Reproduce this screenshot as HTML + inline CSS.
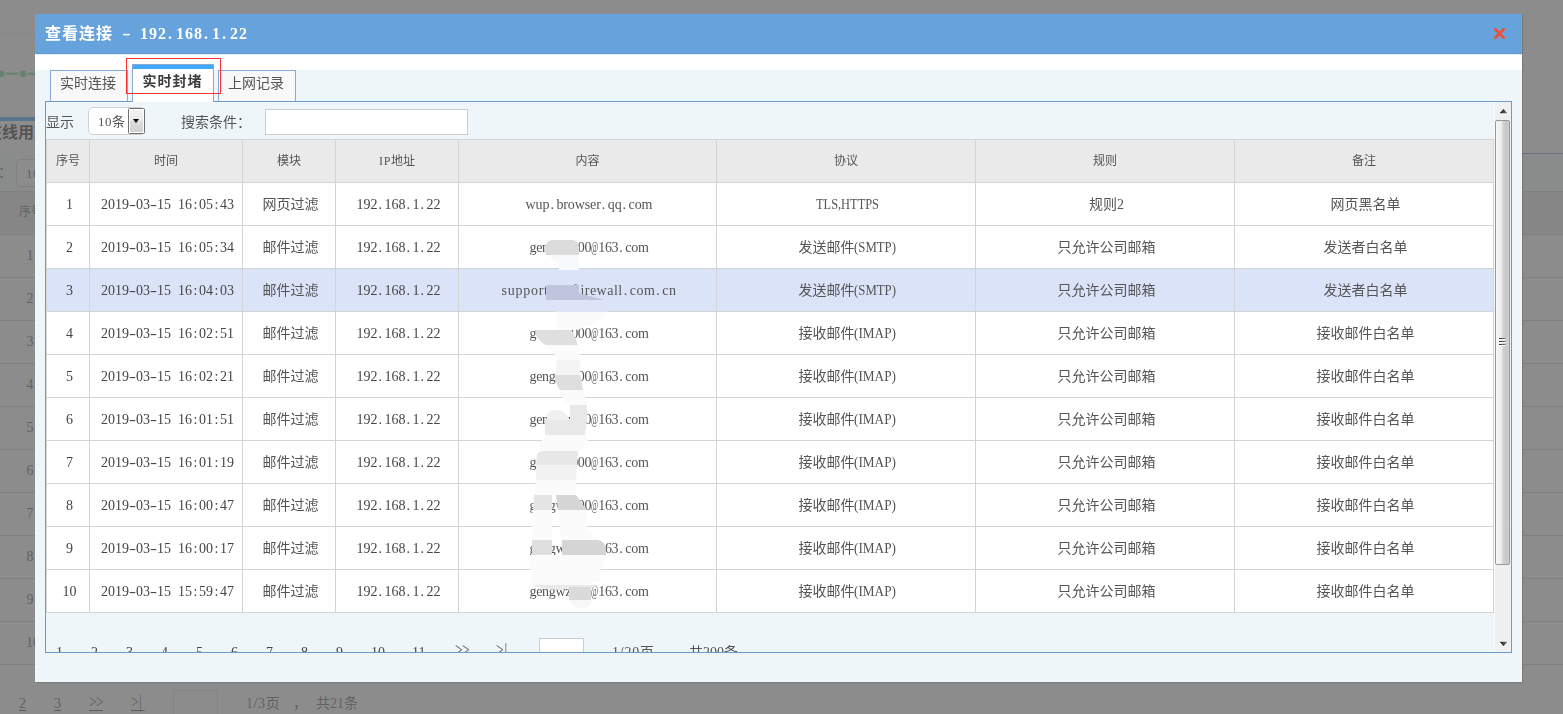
<!DOCTYPE html>
<html lang="zh-CN">
<head>
<meta charset="utf-8">
<title>查看连接 - 192.168.1.22</title>
<style>
*{box-sizing:border-box}
html,body{margin:0;padding:0}
body{width:1563px;height:714px;overflow:hidden;position:relative;background:#fff;
  font-family:"Liberation Serif","Noto Sans CJK SC",serif;font-size:14px;color:#555}
.abs{position:absolute}
/* ---------- background page ---------- */
#bg{position:absolute;left:0;top:0;width:1563px;height:714px;overflow:hidden;background:#fff;color:#606060}
#bg .ln{position:absolute;left:0;width:1563px;height:1px;background:#ccc}
#bg .num{position:absolute;width:20px;text-align:center;font-size:14px;line-height:16px}
#bg u{position:absolute;top:0;height:15px;text-align:center;text-decoration:none;border-bottom:1px solid #505050}
#bg u.g{font-size:18px;line-height:12px;letter-spacing:-1px;text-align:left;transform:scaleX(.76);transform-origin:0 0;width:18.4px !important}
#mask{position:absolute;left:0;top:0;width:1563px;height:714px;background:rgba(98,98,98,.73)}
/* ---------- dialog ---------- */
#dlg{will-change:transform;position:absolute;left:35px;top:14px;width:1487px;height:668px;background:#eef6fa;
  box-shadow:1px 1px 1px rgba(0,0,0,.12)}
#hd{position:absolute;left:0;top:0;width:1487px;height:41px;background:#66a3dc;border-bottom:1px solid #dceefc;box-shadow:inset 0 -1px 0 #609cd6}
#ttl{position:absolute;left:10px;top:0;height:40px;line-height:39px;font-size:16px;font-weight:bold;color:#fff;white-space:nowrap;margin:0}
#ttl .z{letter-spacing:1px}
#ttl .a{letter-spacing:1px;word-spacing:4px}
#ttl i,#ttl em{display:inline-block;font-style:normal;text-align:center;width:9px;letter-spacing:0}
#ttl i{transform:scaleX(1.6)}
#ttl em{text-align:left;padding-left:1px}
#cls{position:absolute;left:1457px;top:12px;width:15px;height:15px}
#wh{position:absolute;left:0;top:41px;width:1487px;height:15px;background:#fff}
.tab{position:absolute;top:56px;height:32px;width:78px;border:1px solid #8aa8d5;border-bottom:none;background:#f8f8f8;
  text-align:center;line-height:26px;font-size:14px;color:#555;white-space:nowrap;padding-right:2px}
.tab.on{top:50px;height:38px;width:82px;background:#fff;padding-top:4px;box-shadow:inset 0 4px 0 #40a9ff;font-weight:bold;color:#3c3c3c;line-height:25px;z-index:3}
.tab.on span{letter-spacing:1px;margin-right:-1px}
#red{position:absolute;left:91px;top:44px;width:95px;height:36px;border:1px solid #ff2d2d;z-index:5}
#pn{position:absolute;left:10px;top:87px;width:1467px;height:552px;border:1px solid #6f9bc9;background:#eef6fa;overflow:hidden;z-index:2}
#ct{position:absolute;left:0;top:0;width:1448px;height:550px}
.lb{position:absolute;top:10px;line-height:22px;font-size:14px;color:#555;white-space:nowrap}
#sel{position:absolute;left:42px;top:5px;width:57px;height:28px;border:1px solid #d2d2d2;border-radius:5px;background:#fff;
  font-size:13px;line-height:27px;padding-left:9px;color:#555;letter-spacing:.5px;white-space:nowrap}
#sel b{position:absolute;left:39px;top:0;width:17px;height:26px;border:1px solid #6e6e6e;border-radius:1.5px;
  background:linear-gradient(#f3f3f3 0%,#ebebeb 47%,#dedede 50%,#cfcfcf 100%);box-shadow:inset 0 0 0 1px #fff;font-weight:normal}
#sel b:after{content:"";position:absolute;left:3.8px;top:10px;border:3.7px solid transparent;border-top:4px solid #000;border-bottom:none;width:0;height:0}
#q{position:absolute;left:219px;top:7px;width:203px;height:26px;border:1px solid #ccc;background:#fff}
table{position:absolute;left:0;top:37px;width:1448px;border-collapse:collapse;table-layout:fixed;background:#fff}
th,td{border:1px solid #d4d4d4;padding:2px 0 0 3px;text-align:center;white-space:nowrap;overflow:hidden;vertical-align:middle}
th{height:43px;padding:0;background:#eaeaea;font-weight:normal;font-size:12px;color:#555;line-height:20px}
td{height:43px;font-size:14px;color:#555;line-height:20px}
td i,td b,td em{display:inline-block;font-style:normal;font-weight:normal;text-align:center;width:7px;letter-spacing:0}
td i{transform:scaleX(1.5)}
td em{text-align:left;padding-left:1px}
td.d{color:#454545}
td.t{word-spacing:3.5px}
.c1{letter-spacing:-.1px}
.c3{letter-spacing:.74px}
.c3t{letter-spacing:.49px;margin-left:3px}
.c2{letter-spacing:-.31px}
td u{display:inline-block;width:7px;text-decoration:none;letter-spacing:0;transform:scaleX(.56);transform-origin:0 50%;white-space:nowrap}
.p1,.p2,.p3{display:inline-block;transform-origin:0 50%}
.p1{transform:scaleX(.885);margin-right:-8.2px}
.p2{transform:scaleX(.915);margin-right:-3.9px}
.p3{transform:scaleX(.947);margin-right:-2.3px}
tr.hl td{background:#dbe3f9}
.pg{position:absolute;top:543px;font-size:14px;line-height:16px;color:#555;white-space:nowrap}
.pg.n{color:#454545}
.pg.gt{font-size:18px;top:540px;letter-spacing:-1px;transform:scaleX(.76);transform-origin:0 0}
#pi{position:absolute;left:493px;top:536px;width:45px;height:26px;border:1px solid #ccc;background:#fff}
/* scrollbar */
#sb{position:absolute;left:1448px;top:0;width:17px;height:550px;background:#f0f0f0;border-left:1px solid #fafafa}
#th{position:absolute;left:0;top:18px;width:15px;height:445px;border:1px solid #979797;border-radius:2px;
  background:linear-gradient(90deg,#f7f7f7 0%,#ededed 40%,#d2d2d4 55%,#c6c6c9 85%,#d6d6d6 100%)}
#th s{position:absolute;left:3px;width:7px;height:1px;background:linear-gradient(90deg,#2a2a2a,#8a8a8a);box-shadow:0 1px 0 rgba(255,255,255,.85),1px 0 0 rgba(255,255,255,.6)}
</style>
</head>
<body>
<div id="bg">
  <div class="ln" style="top:33px;width:40px;background:#eee"></div>
  <svg class="abs" style="left:0;top:66px" width="40" height="16" viewBox="0 0 40 16" aria-hidden="true"><path d="M5.6 7.8H18.4M27.6 7.8H40" stroke="#6ed796" stroke-width="2" fill="none"/><circle cx="1.2" cy="7.8" r="3.2" fill="#6ed796"/><circle cx="23" cy="7.8" r="3.2" fill="#6ed796"/></svg>
  <div class="abs" style="left:-60px;top:117px;width:95px;height:4px;background:#40a9ff"></div>
  <div class="abs" style="left:35px;top:153px;width:1528px;height:1px;background:#6f9bc9"></div>
  <div class="abs" style="left:0;top:154px;width:1563px;height:37px;background:#f6f9fc"></div>
  <h2 class="abs" style="left:-14px;top:123px;margin:0;font-size:16px;line-height:20px;font-weight:bold;color:#333;white-space:nowrap">在线用户</h2>
  <div class="abs" style="left:-30px;top:164px;font-size:14px;line-height:18px;white-space:nowrap">显示：</div>
  <div class="abs" style="left:16px;top:159px;width:57px;height:28px;border:1px solid #d2d2d2;border-radius:5px;background:#fff;font-size:13px;line-height:27px;padding-left:9px;letter-spacing:.5px;white-space:nowrap">10条</div>
  <div class="abs" style="left:0;top:191px;width:1563px;height:44px;background:#eaeaea;border-top:1px solid #d4d4d4"></div>
  <div class="abs" style="left:0;top:235px;width:1563px;height:430px;background:#fff"></div>
  <div class="abs" style="left:19px;top:204px;font-size:12px;line-height:16px;white-space:nowrap">序号</div>
  <div class="ln" style="top:234px;background:#d4d4d4"></div>
  <div class="ln" style="top:277px;background:#d4d4d4"></div>
  <div class="ln" style="top:320px;background:#d4d4d4"></div>
  <div class="ln" style="top:363px;background:#d4d4d4"></div>
  <div class="ln" style="top:406px;background:#d4d4d4"></div>
  <div class="ln" style="top:449px;background:#d4d4d4"></div>
  <div class="ln" style="top:492px;background:#d4d4d4"></div>
  <div class="ln" style="top:535px;background:#d4d4d4"></div>
  <div class="ln" style="top:578px;background:#d4d4d4"></div>
  <div class="ln" style="top:621px;background:#d4d4d4"></div>
  <div class="ln" style="top:664px;background:#d4d4d4"></div>
  <div class="num" style="left:20px;top:248px">1</div>
  <div class="num" style="left:20px;top:291px">2</div>
  <div class="num" style="left:20px;top:334px">3</div>
  <div class="num" style="left:20px;top:377px">4</div>
  <div class="num" style="left:20px;top:420px">5</div>
  <div class="num" style="left:20px;top:463px">6</div>
  <div class="num" style="left:20px;top:506px">7</div>
  <div class="num" style="left:20px;top:549px">8</div>
  <div class="num" style="left:20px;top:592px">9</div>
  <div class="num" style="left:23px;top:635px">10</div>
  <div class="abs" style="left:0;top:696px;width:160px;height:18px;font-size:14px;line-height:15px;white-space:nowrap"><u style="left:19px;width:7px">2</u><u style="left:54px;width:7px">3</u><u class="g" style="left:89px;width:14px">&gt;&gt;</u><u class="g" style="left:131px;width:14px;letter-spacing:.5px">&gt;|</u></div>
  <div class="abs" style="left:173px;top:690px;width:45px;height:26px;border:1px solid #dadada;background:#fff"></div>
  <div class="abs" style="left:246px;top:696px;font-size:14px;line-height:16px;white-space:nowrap"><span style="letter-spacing:.6px">1/3</span>页</div>
  <div class="abs" style="left:293px;top:696px;font-size:14px;line-height:16px;white-space:nowrap">，</div>
  <div class="abs" style="left:316px;top:696px;font-size:14px;line-height:16px;white-space:nowrap">共21条</div>
</div>
<div id="mask"></div>
<div id="dlg">
  <div id="hd">
    <h1 id="ttl"><span class="z">查看连接</span><span class="a"> <i>-</i> 192<em>.</em>168<em>.</em>1<em>.</em>22</span></h1>
    <svg id="cls" viewBox="0 0 15 15"><path d="M3.3 3.3L11.7 11.7M11.7 3.3L3.3 11.7" stroke="#f04e37" stroke-width="2.7" stroke-linecap="round" fill="none"/></svg>
  </div>
  <div id="wh"></div>
  <div class="tab" style="left:15px">实时连接</div>
  <div class="tab on" style="left:97px"><span>实时封堵</span></div>
  <div class="tab" style="left:183px">上网记录</div>
  <div id="red"></div>
  <div id="pn">
    <div id="ct">
      <div class="lb" style="left:0">显示</div>
      <div id="sel">10条<b></b></div>
      <div class="lb" style="left:135px">搜索条件：</div>
      <div id="q"></div>
      <table>
        <colgroup><col style="width:43px"><col style="width:153px"><col style="width:93px"><col style="width:123px"><col style="width:258px"><col style="width:259px"><col style="width:259px"><col style="width:259px"></colgroup>
        <thead><tr><th>序号</th><th>时间</th><th>模块</th><th><span style="letter-spacing:.66px">IP</span>地址</th><th>内容</th><th>协议</th><th>规则</th><th>备注</th></tr></thead>
        <tbody>
<tr><td class="d">1</td><td class="d t">2019<i>-</i>03<i>-</i>15 16<b>:</b>05<b>:</b>43</td><td>网页过滤</td><td class="d">192<em>.</em>168<em>.</em>1<em>.</em>22</td><td><span class="c1">wup<em>.</em>browser<em>.</em>qq<em>.</em>com</span></td><td><span class="p1">TLS,HTTPS</span></td><td>规则2</td><td>网页黑名单</td></tr>
<tr><td class="d">2</td><td class="d t">2019<i>-</i>03<i>-</i>15 16<b>:</b>05<b>:</b>34</td><td>邮件过滤</td><td class="d">192<em>.</em>168<em>.</em>1<em>.</em>22</td><td><span class="c2">gengwz000<u>@</u>163<em>.</em>com</span></td><td>发送邮件<span class="p2">(SMTP)</span></td><td>只允许公司邮箱</td><td>发送者白名单</td></tr>
<tr class="hl"><td class="d">3</td><td class="d t">2019<i>-</i>03<i>-</i>15 16<b>:</b>04<b>:</b>03</td><td>邮件过滤</td><td class="d">192<em>.</em>168<em>.</em>1<em>.</em>22</td><td><span class="c3">support<u>@</u>imf<span class="c3t">irewall<em>.</em>com<em>.</em>cn</span></span></td><td>发送邮件<span class="p2">(SMTP)</span></td><td>只允许公司邮箱</td><td>发送者白名单</td></tr>
<tr><td class="d">4</td><td class="d t">2019<i>-</i>03<i>-</i>15 16<b>:</b>02<b>:</b>51</td><td>邮件过滤</td><td class="d">192<em>.</em>168<em>.</em>1<em>.</em>22</td><td><span class="c2">gengwz000<u>@</u>163<em>.</em>com</span></td><td>接收邮件<span class="p3">(IMAP)</span></td><td>只允许公司邮箱</td><td>接收邮件白名单</td></tr>
<tr><td class="d">5</td><td class="d t">2019<i>-</i>03<i>-</i>15 16<b>:</b>02<b>:</b>21</td><td>邮件过滤</td><td class="d">192<em>.</em>168<em>.</em>1<em>.</em>22</td><td><span class="c2">gengwz000<u>@</u>163<em>.</em>com</span></td><td>接收邮件<span class="p3">(IMAP)</span></td><td>只允许公司邮箱</td><td>接收邮件白名单</td></tr>
<tr><td class="d">6</td><td class="d t">2019<i>-</i>03<i>-</i>15 16<b>:</b>01<b>:</b>51</td><td>邮件过滤</td><td class="d">192<em>.</em>168<em>.</em>1<em>.</em>22</td><td><span class="c2">gengwz000<u>@</u>163<em>.</em>com</span></td><td>接收邮件<span class="p3">(IMAP)</span></td><td>只允许公司邮箱</td><td>接收邮件白名单</td></tr>
<tr><td class="d">7</td><td class="d t">2019<i>-</i>03<i>-</i>15 16<b>:</b>01<b>:</b>19</td><td>邮件过滤</td><td class="d">192<em>.</em>168<em>.</em>1<em>.</em>22</td><td><span class="c2">gengwz000<u>@</u>163<em>.</em>com</span></td><td>接收邮件<span class="p3">(IMAP)</span></td><td>只允许公司邮箱</td><td>接收邮件白名单</td></tr>
<tr><td class="d">8</td><td class="d t">2019<i>-</i>03<i>-</i>15 16<b>:</b>00<b>:</b>47</td><td>邮件过滤</td><td class="d">192<em>.</em>168<em>.</em>1<em>.</em>22</td><td><span class="c2">gengwz000<u>@</u>163<em>.</em>com</span></td><td>接收邮件<span class="p3">(IMAP)</span></td><td>只允许公司邮箱</td><td>接收邮件白名单</td></tr>
<tr><td class="d">9</td><td class="d t">2019<i>-</i>03<i>-</i>15 16<b>:</b>00<b>:</b>17</td><td>邮件过滤</td><td class="d">192<em>.</em>168<em>.</em>1<em>.</em>22</td><td><span class="c2">gengwz000<u>@</u>163<em>.</em>com</span></td><td>接收邮件<span class="p3">(IMAP)</span></td><td>只允许公司邮箱</td><td>接收邮件白名单</td></tr>
<tr><td class="d">10</td><td class="d t">2019<i>-</i>03<i>-</i>15 15<b>:</b>59<b>:</b>47</td><td>邮件过滤</td><td class="d">192<em>.</em>168<em>.</em>1<em>.</em>22</td><td><span class="c2">gengwz000<u>@</u>163<em>.</em>com</span></td><td>接收邮件<span class="p3">(IMAP)</span></td><td>只允许公司邮箱</td><td>接收邮件白名单</td></tr>
        </tbody>
      </table>
      <svg id="sm" class="abs" style="left:474px;top:128px;z-index:4" width="100" height="390" viewBox="520 230 100 390" aria-hidden="true">
        <path d="M545.5 255V247a7 7 0 0 1 7-7h19.5a7 7 0 0 1 7 7V255Z" fill="#dcdcdc"/>
        <path d="M549 255H579V270H559V262Q552 261 549 255Z" fill="#f8f9fc"/>
        <path d="M546 285H579V293L604 300H546Z" fill="#bfc5dd"/>
        <path d="M546 300H606Q609 306 607 312H556Q547 310 546 300Z" fill="#dee3f7"/>
        <path d="M556 312H607Q603 321 580 329L575 330H556Z" fill="#fbfbfb"/>
        <path d="M536 330H572L578 345H546Q538 341 536 334Z" fill="#dfdfdf"/>
        <path d="M546 345H578L580 360H558Q552 350 546 345Z" fill="#fbfbfb"/>
        <path d="M557 360H580V375H555Z" fill="#f4f4f4"/>
        <path d="M555 375H580L583 390H560Q555 384 555 375Z" fill="#dedede"/>
        <path d="M560 390H583L587 405H566Z" fill="#fbfbfb"/>
        <path d="M570 405H587V420H570Z" fill="#e8e8e8"/>
        <path d="M547 420V416a6 6 0 0 1 6-6h6q7 2 11 10Z" fill="#f0f0f0"/>
        <path d="M545 420H587L585 435H545Z" fill="#e9e9e9"/>
        <path d="M545 435H585L590 444Q588 450 578 451H538Q540 442 545 435Z" fill="#fbfbfb"/>
        <path d="M536.5 457a6 6 0 0 1 6-6h35.5L577 465H536.5Z" fill="#e7e7e7"/>
        <path d="M536.5 465H577L576 480H536Z" fill="#f2f2f2"/>
        <path d="M536 480H576V495H534Z" fill="#fbfbfb"/>
        <path d="M534 495H552V510H533Z" fill="#e4e4e4"/>
        <path d="M556 495H576L587 510H558Z" fill="#d6d6d6"/>
        <path d="M533 510H552V540H532Z" fill="#fbfbfb"/>
        <path d="M558 510H587L586 525Q590 535 600 540H561Z" fill="#fbfbfb"/>
        <path d="M532 540H552V555H532Z" fill="#dfdfdf"/>
        <path d="M562 540H597a9 9 0 0 1 9 9V555H562Z" fill="#d5d5d5"/>
        <path d="M530 555H606Q606 566 600 570V580Q590 585 575 585H531Z" fill="#fbfbfb"/>
        <path d="M531 585H600L591 588H569L560 590Q545 590 531 585Z" fill="#e9e9e9"/>
        <path d="M569 587H591V600H569Z" fill="#dadada"/>
        <path d="M570 600H592Q590 608 581 608Q572 608 570 600Z" fill="#f7f7f7"/>
      </svg>

      <div class="pg n" style="left:10px">1</div>
      <div class="pg n" style="left:45px">2</div>
      <div class="pg n" style="left:80px">3</div>
      <div class="pg n" style="left:115px">4</div>
      <div class="pg n" style="left:150px">5</div>
      <div class="pg n" style="left:185px">6</div>
      <div class="pg n" style="left:220px">7</div>
      <div class="pg n" style="left:255px">8</div>
      <div class="pg n" style="left:290px">9</div>
      <div class="pg n" style="left:325px">10</div>
      <div class="pg n" style="left:366px">11</div>
      <div class="pg gt" style="left:409px">&gt;&gt;</div>
      <div class="pg gt" style="left:450px;letter-spacing:1px">&gt;|</div>
      <div id="pi"></div>
      <div class="pg" style="left:566px"><span style="letter-spacing:.78px">1/20</span>页</div>
      <div class="pg" style="left:620px">，</div>
      <div class="pg" style="left:643px">共200条</div>
    </div>
    <div id="sb"><svg class="abs" style="left:-1px;top:0" width="17" height="550" viewBox="0 0 17 550" aria-hidden="true"><defs><linearGradient id="ag" x1="0" x2="1" y1="0" y2="0"><stop offset="0" stop-color="#111"/><stop offset="1" stop-color="#777"/></linearGradient></defs><path d="M5.6 11.2L9.5 6.8L13.4 11.2Z" fill="url(#ag)" stroke="#fff" stroke-opacity=".8" stroke-width="1.2" paint-order="stroke"/><path d="M5.6 539.8L9.5 544.2L13.4 539.8Z" fill="url(#ag)" stroke="#fff" stroke-opacity=".8" stroke-width="1.2" paint-order="stroke"/></svg><div id="th"><s style="top:217px"></s><s style="top:220px"></s><s style="top:223px"></s></div></div>
  </div>
</div>
</body>
</html>
